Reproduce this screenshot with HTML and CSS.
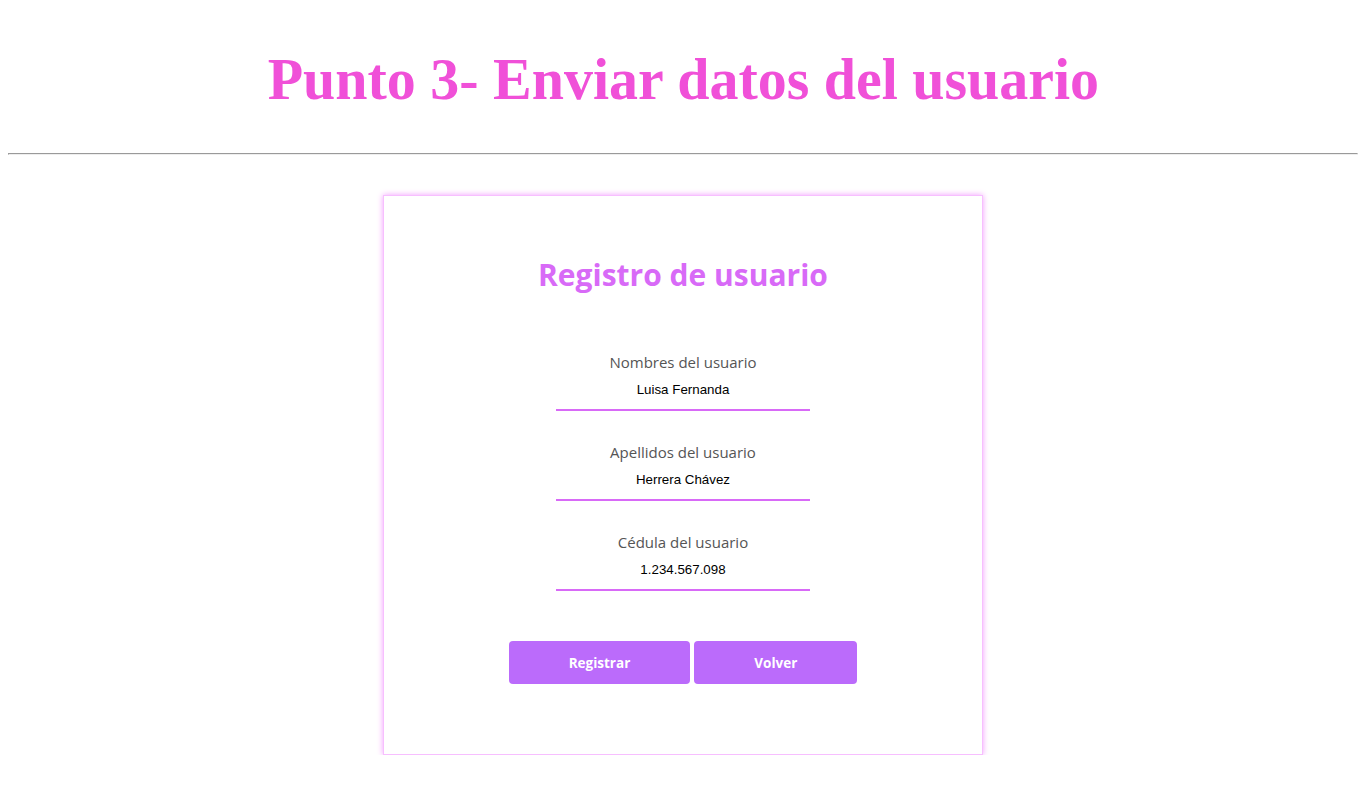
FILE: index.html
```html
<!DOCTYPE html>
<html lang="es">
<head>
<meta charset="utf-8">
<title>Punto 3</title>
<link rel="stylesheet" href="styles.css">
</head>
<body>
<h1 class="page-title"><span class="page-title-text">Punto 3- Enviar datos del usuario</span></h1>
<hr class="divider">
<div class="card">
  <h2 class="card-title">Registro de usuario</h2>
  <form class="form">
    <div class="field">
      <label class="field-label" for="nombres">Nombres del usuario</label>
      <input class="field-input" id="nombres" type="text" value="Luisa Fernanda">
    </div>
    <div class="field">
      <label class="field-label" for="apellidos">Apellidos del usuario</label>
      <input class="field-input" id="apellidos" type="text" value="Herrera Chávez">
    </div>
    <div class="field">
      <label class="field-label" for="cedula">Cédula del usuario</label>
      <input class="field-input" id="cedula" type="text" value="1.234.567.098">
    </div>
    <div class="actions">
      <button class="btn" type="button">Registrar</button>
      <button class="btn" type="button">Volver</button>
    </div>
  </form>
</div>
</body>
</html>
```
FILE: styles.css
```css
body {
  margin: 8px;
  background: #ffffff;
}

.page-title {
  margin: 37px 0 39px;
  text-align: center;
  font-family: "Liberation Serif", "Times New Roman", serif;
  font-weight: bold;
  font-size: 60px;
  line-height: 69px;
  color: #f050d8;
}

.page-title-text {
  display: inline-block;
  transform: scaleX(0.966);
  white-space: nowrap;
}

.divider {
  margin: 8px 0 40px;
}

.card {
  width: 598px;
  height: 558px;
  margin: 0 auto;
  border: 1px solid #f7bfff;
  box-shadow: 0 0 6px #f39cff;
  display: flex;
  flex-direction: column;
  align-items: center;
}

.card-title {
  margin: 59px 0 0;
  font-family: "Open Sans", sans-serif;
  font-weight: bold;
  font-size: 30px;
  line-height: 40px;
  color: #d86af7;
}

.form {
  margin-top: 56px;
  display: flex;
  flex-direction: column;
  align-items: center;
}

.field {
  display: flex;
  flex-direction: column;
  align-items: center;
  margin-bottom: 30px;
}

.field-label {
  font-family: "Open Sans", sans-serif;
  font-size: 15px;
  line-height: 22px;
  color: #555555;
}

.field-input {
  width: 254px;
  box-sizing: border-box;
  margin: 0;
  padding: 9px 0 12px;
  border: none;
  border-bottom: 2px solid #d86af7;
  outline: none;
  text-align: center;
  font-family: "Liberation Sans", Arial, sans-serif;
  font-size: 13.33px;
  color: #000000;
  background: transparent;
}

.actions {
  display: flex;
  gap: 4px;
  margin-top: 20px;
}

.btn {
  height: 43px;
  padding: 0 60px;
  border: none;
  border-radius: 4px;
  background: #bb6bfb;
  color: #ffffff;
  font-family: "Open Sans", sans-serif;
  font-weight: bold;
  font-size: 13.5px;
}
```
